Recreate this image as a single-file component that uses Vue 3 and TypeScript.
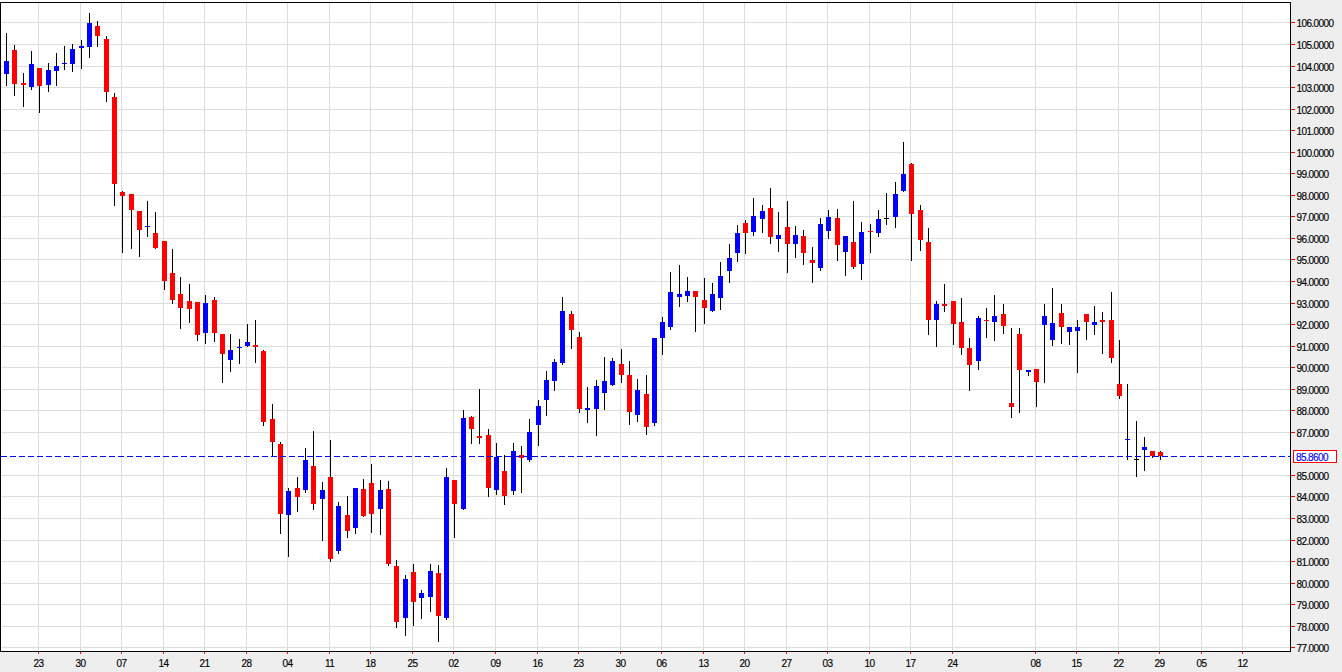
<script setup lang="ts">
type Candle = [number, number, number, number, number, string]

const R = 'r'
const B = 'b'
const K = 'k'

// x, wick top, wick bottom, body top, body bottom, colour
const candles: Candle[] = [
  [6, 33, 86, 61, 74, B], [14, 45, 96, 50, 84, R], [23, 73, 107, 83, 85, R], [31, 51, 90, 64, 87, B],
  [39, 68, 113, 68, 86, R], [48, 63, 92, 70, 85, B], [56, 53, 86, 66, 71, B], [64, 46, 70, 63, 64, B],
  [72, 44, 72, 49, 64, B], [81, 40, 69, 46, 48, B], [89, 13, 58, 23, 47, B], [97, 21, 47, 26, 36, R],
  [106, 36, 102, 39, 92, R], [114, 93, 206, 97, 184, R], [122, 191, 253, 192, 196, R], [131, 194, 249, 194, 210, R],
  [139, 211, 257, 211, 230, R], [147, 201, 237, 226, 227, B], [155, 212, 249, 233, 248, R], [164, 241, 290, 241, 281, R],
  [172, 249, 304, 273, 300, R], [180, 277, 329, 294, 308, R], [189, 284, 323, 301, 309, R], [197, 302, 341, 302, 335, R],
  [205, 295, 344, 303, 333, B], [214, 297, 342, 300, 333, R], [222, 334, 383, 334, 354, R], [230, 334, 372, 350, 360, B],
  [239, 339, 364, 347, 348, B], [247, 324, 347, 342, 346, B], [255, 320, 363, 345, 347, R], [263, 350, 426, 351, 422, R],
  [272, 404, 457, 419, 442, R], [280, 442, 534, 444, 514, R], [288, 488, 557, 491, 515, B], [297, 477, 512, 488, 497, R],
  [305, 448, 493, 460, 490, B], [313, 431, 510, 466, 504, R], [322, 482, 541, 490, 499, B], [330, 440, 562, 477, 559, R],
  [338, 502, 554, 506, 551, B], [347, 496, 538, 515, 531, R], [355, 488, 534, 488, 528, B], [363, 479, 517, 489, 516, R],
  [371, 464, 533, 483, 514, R], [380, 480, 535, 490, 509, B], [388, 481, 566, 489, 564, R], [396, 560, 628, 566, 622, R],
  [405, 575, 636, 579, 618, B], [413, 564, 626, 572, 602, R], [421, 590, 619, 593, 598, B], [430, 564, 612, 571, 597, B],
  [438, 565, 642, 573, 616, R], [446, 468, 620, 477, 618, B], [454, 480, 538, 480, 504, R], [463, 410, 510, 418, 509, B],
  [471, 416, 444, 417, 429, R], [479, 389, 444, 436, 438, R], [488, 429, 497, 435, 488, R], [496, 443, 495, 457, 490, B],
  [504, 455, 505, 471, 496, R], [513, 443, 495, 451, 491, B], [521, 446, 493, 455, 458, R], [529, 419, 462, 432, 460, B],
  [538, 400, 446, 406, 425, B], [546, 371, 416, 380, 400, B], [554, 359, 391, 362, 381, B], [562, 297, 365, 311, 363, B],
  [571, 311, 349, 314, 330, R], [579, 332, 413, 337, 409, R], [587, 387, 423, 408, 410, B], [596, 380, 436, 386, 409, B],
  [604, 357, 410, 381, 393, B], [612, 358, 386, 361, 385, B], [621, 349, 383, 364, 375, R], [629, 361, 425, 375, 412, R],
  [637, 379, 422, 390, 415, B], [646, 375, 435, 394, 427, R], [654, 338, 426, 338, 423, B], [662, 317, 355, 322, 338, B],
  [670, 272, 330, 292, 327, B], [679, 265, 307, 294, 297, B], [687, 277, 302, 291, 296, B], [695, 291, 332, 291, 297, R],
  [704, 278, 324, 300, 308, R], [712, 283, 312, 294, 311, B], [720, 262, 310, 276, 298, B], [729, 244, 283, 258, 271, B],
  [737, 225, 262, 233, 253, B], [745, 220, 254, 223, 233, R], [753, 198, 236, 216, 232, B], [762, 205, 233, 211, 219, B],
  [770, 188, 244, 208, 237, R], [778, 212, 252, 235, 239, B], [787, 201, 273, 227, 244, R], [795, 226, 258, 235, 244, B],
  [803, 230, 265, 236, 253, R], [812, 247, 283, 260, 263, R], [820, 218, 271, 224, 268, B], [828, 210, 239, 217, 231, B],
  [837, 209, 261, 218, 245, R], [845, 236, 276, 236, 252, B], [853, 201, 269, 242, 267, R], [861, 222, 280, 232, 264, B],
  [870, 224, 253, 231, 232, R], [878, 210, 237, 219, 233, B], [886, 193, 225, 218, 219, K], [895, 182, 228, 194, 217, B],
  [903, 142, 192, 174, 191, B], [911, 163, 261, 164, 214, R], [920, 205, 251, 210, 240, R], [928, 228, 335, 242, 320, R],
  [936, 301, 347, 304, 320, B], [944, 284, 312, 304, 306, R], [953, 301, 345, 301, 324, R], [961, 298, 355, 322, 348, R],
  [969, 338, 391, 348, 365, R], [978, 316, 370, 318, 361, B], [986, 308, 338, 320, 321, R], [994, 295, 341, 316, 322, B],
  [1003, 304, 334, 314, 326, R], [1011, 328, 418, 403, 407, R], [1019, 328, 413, 334, 370, R], [1028, 370, 376, 370, 372, B],
  [1036, 369, 407, 369, 382, R], [1044, 304, 383, 316, 325, B], [1052, 288, 346, 323, 340, B], [1061, 304, 344, 313, 327, R],
  [1069, 327, 345, 327, 332, B], [1077, 320, 373, 327, 331, B], [1086, 314, 340, 314, 322, R], [1094, 306, 335, 322, 325, B],
  [1102, 312, 354, 320, 322, R], [1111, 292, 363, 320, 358, R], [1119, 340, 399, 384, 396, R], [1127, 384, 460, 439, 440, B],
  [1136, 421, 477, 459, 460, K], [1144, 437, 471, 447, 450, B], [1152, 451, 458, 451, 456, R], [1160, 451, 460, 452, 456, R],
]

const fills: Record<string, string> = { r: '#ff0000', b: '#0000ff', k: '#000000' }

const gridY = [22, 44, 66, 87, 109, 130, 152, 173, 195, 216, 238, 259, 281, 303, 324, 346, 367, 389, 410, 432, null, 475, 496, 518, 540, 561, 583, 604, 626, 647]
const priceRows = gridY
  .map((y, i) => ({ y, label: (106 - i).toFixed(4) }))
  .filter((row): row is { y: number; label: string } => row.y !== null)

const dateColumns: [number, string][] = [
  [38, '23'], [80, '30'], [121, '07'], [163, '14'], [204, '21'], [246, '28'], [287, '04'], [329, '11'],
  [370, '18'], [412, '25'], [453, '02'], [495, '09'], [537, '16'], [578, '23'], [620, '30'], [661, '06'],
  [703, '13'], [744, '20'], [786, '27'], [827, '03'], [869, '10'], [910, '17'], [952, '24'], [1035, '08'],
  [1076, '15'], [1118, '22'], [1159, '29'], [1201, '05'], [1242, '12'],
]
</script>

<template>
  <div class="chart">
    <svg class="canvas" width="1342" height="672" viewBox="0 0 1342 672" shape-rendering="crispEdges">
      <rect class="plot" x="0" y="0" width="1291" height="652" />
      <g class="grid">
        <rect v-for="row in priceRows" :key="'gy' + row.y" x="1" :y="row.y" width="1289" height="1" />
        <rect v-for="col in dateColumns" :key="'gx' + col[0]" :x="col[0]" y="3" width="1" height="648" />
      </g>
      <g class="frame">
        <rect x="0" y="2" width="1291" height="1" />
        <rect x="0" y="651" width="1291" height="1" />
        <rect x="0" y="2" width="1" height="650" />
        <rect x="1290" y="2" width="1" height="650" />
      </g>
      <g class="ticks">
        <rect v-for="row in priceRows" :key="'ty' + row.y" x="1291" :y="row.y" width="4" height="1" />
        <rect v-for="col in dateColumns" :key="'tx' + col[0]" :x="col[0]" y="652" width="1" height="2" />
      </g>
      <g v-for="c in candles" :key="c[0]">
        <rect class="wick" :x="c[0]" :y="c[1]" width="1" :height="c[2] - c[1]" />
        <rect :x="c[0] - 2" :y="c[3]" width="5" :height="c[4] - c[3]" :fill="fills[c[5]]" />
      </g>
      <line class="last" x1="1" y1="456.5" x2="1290" y2="456.5" />
      <g class="labels">
        <text v-for="row in priceRows" :key="'ly' + row.y" x="1296.5" :y="row.y + 5">{{ row.label }}</text>
        <text v-for="col in dateColumns" :key="'lx' + col[0]" :x="col[0] + 0.5" y="667" text-anchor="middle">{{ col[1] }}</text>
      </g>
      <rect class="tag" x="1293.5" y="450.5" width="43" height="12" />
      <text class="tag-text" x="1296" y="461">85.8600</text>
    </svg>
  </div>
</template>

<style scoped>
.chart {
  width: 1342px;
  height: 672px;
  overflow: hidden;
  background: #eeeeee;
}
.canvas {
  display: block;
}
.plot {
  fill: #ffffff;
}
.grid {
  fill: #dddddd;
}
.frame,
.wick {
  fill: #000000;
}
.ticks {
  fill: #ff0000;
}
.last {
  stroke: #0000ff;
  stroke-width: 1;
  stroke-dasharray: 6 3;
}
.labels text,
.tag-text {
  font-family: "Liberation Sans", Arial, sans-serif;
  font-size: 10px;
  letter-spacing: -0.6px;
  fill: #000000;
  stroke: #000000;
  stroke-width: 0.15px;
}
.tag {
  fill: #ffffff;
  stroke: #ff0000;
  stroke-width: 1;
}
.tag-text {
  fill: #0000ff;
  stroke: #0000ff;
}
</style>
